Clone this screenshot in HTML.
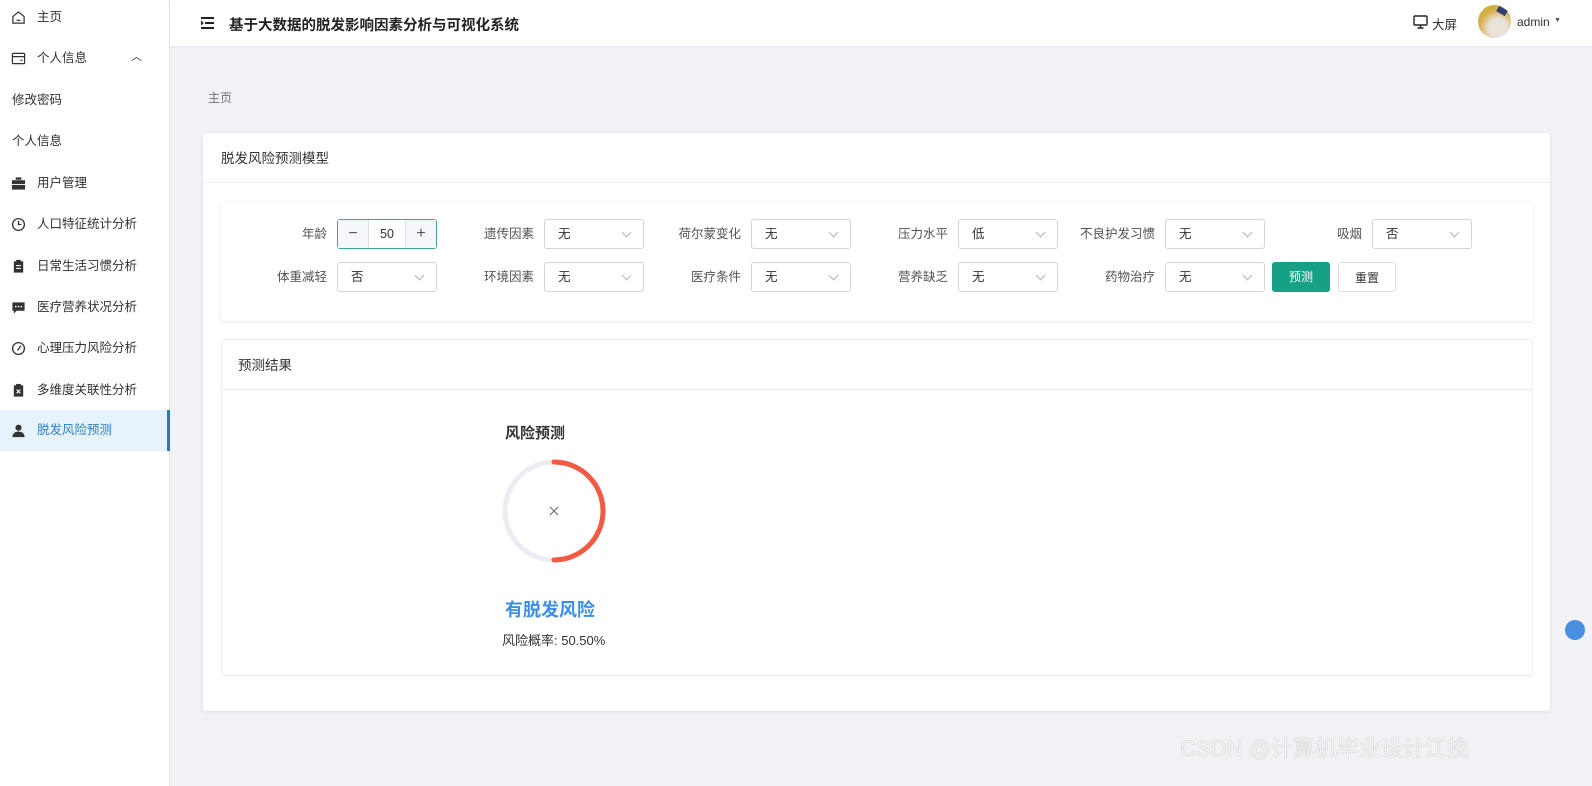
<!DOCTYPE html>
<html><head><meta charset="utf-8"><style>
*{margin:0;padding:0;box-sizing:border-box}
body{width:1592px;height:786px;overflow:hidden;background:#f0f2f5;font-family:"Liberation Sans","Noto Sans CJK SC",sans-serif;font-size:13px;color:#303133;position:relative}
.side{position:absolute;left:0;top:0;width:170px;height:786px;background:#fff;border-right:1px solid #e3e4e8}
.mi{position:absolute;left:0;width:169px;height:41px;line-height:41px;padding-left:37px;font-size:12.5px;color:#303133}
.mi.sub{padding-left:12px}
.mi svg{position:absolute;left:11px;top:13px}
.mi.act{background:#e6f3fd;color:#2f80c8;border-right:3px solid #2a78c2;width:170px}
.hdr{position:absolute;left:170px;top:0;width:1422px;height:46px;background:#fff;box-shadow:0 1px 3px rgba(0,0,0,.06)}
.title{position:absolute;left:59px;top:14px;font-size:14.5px;font-weight:bold;color:#222}
.card{position:absolute;left:203px;top:133px;width:1347px;height:578px;background:#fff;border-radius:3px;box-shadow:0 1px 4px rgba(0,0,0,.08)}
.ch{height:50px;line-height:52px;padding-left:18px;font-size:13.5px;border-bottom:1px solid #ebeef5}
.form{position:absolute;left:18px;top:69px;width:1312px;height:119px;background:#fff;box-shadow:0 1px 5px rgba(0,0,0,.1);border-radius:3px}
.lbl{position:absolute;width:100px;text-align:right;font-size:12.5px;color:#505257;line-height:30px}
.sel{position:absolute;width:100px;height:30px;border:1px solid #d3d6dd;border-radius:3px;line-height:28px;padding-left:13px;font-size:12.5px}
.sel:after{content:"";position:absolute;right:13px;top:9px;width:6px;height:6px;border-right:1px solid #b0b3b9;border-bottom:1px solid #b0b3b9;transform:rotate(45deg)}
.res{position:absolute;left:18px;top:206px;width:1312px;height:337px;border:1px solid #ebeef5;border-radius:3px}
.btn{position:absolute;height:30px;width:58px;border-radius:3px;text-align:center;line-height:30px;font-size:12px}
</style></head><body>
<div class="side">
<div class="mi" style="top:-3px"><svg width="15" height="15" viewBox="0 0 16 16" fill="none" stroke="#333" stroke-width="1.3"><path d="M2 7 8 2l6 5v7H2z"/><path d="M6 11h4"/></svg>主页</div>
<div class="mi" style="top:38px"><svg width="15" height="15" viewBox="0 0 16 16" fill="none" stroke="#333" stroke-width="1.3"><rect x="1.5" y="2.5" width="13" height="11" rx="1"/><path d="M1.5 6h13M10 10h2"/></svg>个人信息<span style="position:absolute;left:131px;top:-1px;font-size:11px">︿</span></div>
<div class="mi sub" style="top:80px">修改密码</div>
<div class="mi sub" style="top:121px">个人信息</div>
<div class="mi" style="top:163px"><svg width="15" height="15" viewBox="0 0 16 16" fill="#333"><rect x="5" y="1.5" width="6" height="2.5"/><rect x="1" y="4.5" width="14" height="4"/><rect x="1" y="9.5" width="14" height="5"/></svg>用户管理</div>
<div class="mi" style="top:204px"><svg width="15" height="15" viewBox="0 0 16 16" fill="none" stroke="#333" stroke-width="1.4"><circle cx="8" cy="8" r="6.3"/><path d="M8 4v4h3"/></svg>人口特征统计分析</div>
<div class="mi" style="top:246px"><svg width="15" height="15" viewBox="0 0 16 16" fill="#333"><path d="M3 2.5h10v12H3z"/><rect x="5.5" y="1" width="5" height="2.5" fill="#333"/><path d="M5.5 7h5M5.5 10h5" stroke="#fff" stroke-width="1.2"/></svg>日常生活习惯分析</div>
<div class="mi" style="top:287px"><svg width="15" height="15" viewBox="0 0 16 16" fill="#333"><path d="M1.5 2.5h13v9H6l-3 3v-3H1.5z"/><circle cx="5" cy="7" r=".9" fill="#fff"/><circle cx="8" cy="7" r=".9" fill="#fff"/><circle cx="11" cy="7" r=".9" fill="#fff"/></svg>医疗营养状况分析</div>
<div class="mi" style="top:328px"><svg width="15" height="15" viewBox="0 0 16 16" fill="none" stroke="#333" stroke-width="1.4"><circle cx="8" cy="8" r="6.3"/><path d="M10.5 5 7 10" /></svg>心理压力风险分析</div>
<div class="mi" style="top:370px"><svg width="15" height="15" viewBox="0 0 16 16" fill="#333"><path d="M3 2.5h10v12H3z"/><rect x="5.5" y="1" width="5" height="2.5"/><path d="M6 7l4 4M10 7l-4 4" stroke="#fff" stroke-width="1.2"/></svg>多维度关联性分析</div>
<div class="mi act" style="top:410px"><svg width="15" height="15" viewBox="0 0 16 16" fill="#333"><circle cx="8" cy="5" r="3.3"/><path d="M1.5 15c0-4 3-6 6.5-6s6.5 2 6.5 6z"/></svg>脱发风险预测</div>
</div>
<div class="hdr">
<svg style="position:absolute;left:31px;top:17px" width="13" height="12" viewBox="0 0 13 12" fill="#222"><rect x="0" y="0" width="13" height="2"/><rect x="4" y="5" width="9" height="2"/><rect x="0" y="10" width="13" height="2"/><path d="M0 3.5 2.8 6 0 8.5z"/></svg>
<div class="title">基于大数据的脱发影响因素分析与可视化系统</div>
<svg style="position:absolute;left:1243px;top:15px" width="15" height="14" viewBox="0 0 15 14" fill="none" stroke="#222" stroke-width="1.4"><rect x="1" y="1" width="13" height="9" rx="1"/><path d="M7.5 10v3M4.5 13h6"/></svg>
<span style="position:absolute;left:1262px;top:14px;font-size:12.5px">大屏</span>
<div style="position:absolute;left:1308px;top:5px;width:33px;height:33px;border-radius:50%;background:radial-gradient(circle at 60% 70%,#e9e2d8 30%,#d6b04a 60%,#c7a33a)"></div>
<div style="position:absolute;left:1327px;top:8px;width:10px;height:6px;background:#2b3f73;transform:rotate(30deg)"></div>
<span style="position:absolute;left:1347px;top:15px;font-size:12px">admin</span>
<span style="position:absolute;left:1384px;top:17px;font-size:7px;color:#555">▼</span>
</div>
<div style="position:absolute;left:208px;top:89px;font-size:12px;color:#6b6f78">主页</div>
<div class="card">
<div class="ch">脱发风险预测模型</div>
<div class="form">
<div class="lbl" style="left:6px;top:17px">年龄</div>
<div style="position:absolute;left:116px;top:17px;width:100px;height:30px;border:1px solid #3fa88c;border-radius:3px;background:#fff">
<div style="position:absolute;left:0;top:0;width:31px;height:28px;background:#f5f7fa;border-right:1px solid #dcdfe6;text-align:center;line-height:27px;font-size:16px;color:#555">−</div>
<div style="position:absolute;left:0;width:98px;text-align:center;line-height:28px;font-size:12.5px">50</div>
<div style="position:absolute;right:0;top:0;width:31px;height:28px;background:#f5f7fa;border-left:1px solid #dcdfe6;text-align:center;line-height:27px;font-size:16px;color:#555">+</div>
</div>
<div class="lbl" style="left:213px;top:17px">遗传因素</div><div class="sel" style="left:323px;top:17px">无</div>
<div class="lbl" style="left:420px;top:17px">荷尔蒙变化</div><div class="sel" style="left:530px;top:17px">无</div>
<div class="lbl" style="left:627px;top:17px">压力水平</div><div class="sel" style="left:737px;top:17px">低</div>
<div class="lbl" style="left:834px;top:17px">不良护发习惯</div><div class="sel" style="left:944px;top:17px">无</div>
<div class="lbl" style="left:1041px;top:17px">吸烟</div><div class="sel" style="left:1151px;top:17px">否</div>
<div class="lbl" style="left:6px;top:60px">体重减轻</div><div class="sel" style="left:116px;top:60px">否</div>
<div class="lbl" style="left:213px;top:60px">环境因素</div><div class="sel" style="left:323px;top:60px">无</div>
<div class="lbl" style="left:420px;top:60px">医疗条件</div><div class="sel" style="left:530px;top:60px">无</div>
<div class="lbl" style="left:627px;top:60px">营养缺乏</div><div class="sel" style="left:737px;top:60px">无</div>
<div class="lbl" style="left:834px;top:60px">药物治疗</div><div class="sel" style="left:944px;top:60px">无</div>
<div class="btn" style="left:1051px;top:60px;background:#16a085;color:#fff">预测</div>
<div class="btn" style="left:1117px;top:60px;border:1px solid #dcdfe6;color:#333">重置</div>
</div>
<div class="res">
<div class="ch" style="padding-left:16px">预测结果</div>
<div style="position:absolute;left:283px;top:82px;font-size:15px;font-weight:bold;color:#333">风险预测</div>
<svg style="position:absolute;left:278px;top:117px" width="108" height="108" viewBox="0 0 108 108"><circle cx="54" cy="54" r="49" fill="none" stroke="#ebedf2" stroke-width="5"/><path d="M54 5A49 49 0 0 1 54 103" fill="none" stroke="#f25a43" stroke-width="5" stroke-linecap="round"/><path d="M50 50l8 8M58 50l-8 8" stroke="#666" stroke-width="1"/></svg>
<div style="position:absolute;left:283px;top:256px;font-size:18px;font-weight:bold;color:#3d8fe6">有脱发风险</div>
<div style="position:absolute;left:280px;top:290px;font-size:13px;color:#333">风险概率: 50.50%</div>
</div>
</div>
<div style="position:absolute;left:1180px;top:731px;font-size:22px;color:rgba(255,255,255,.85);text-shadow:0 0 1px #999">CSDN @计算机毕业设计江挽</div>
<div style="position:absolute;left:1565px;top:620px;width:20px;height:20px;border-radius:50%;background:#4a90e2"></div>
</body></html>
